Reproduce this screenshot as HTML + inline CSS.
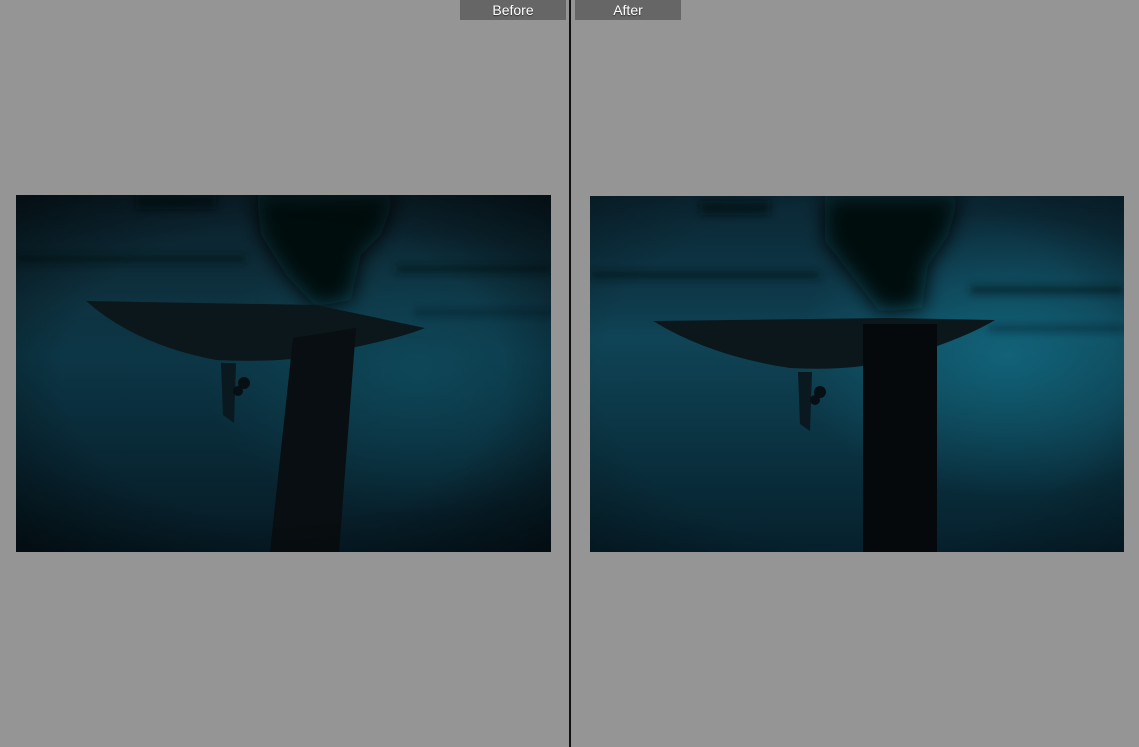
<!DOCTYPE html>
<html><head><style>
html,body{margin:0;padding:0;width:1139px;height:747px;overflow:hidden;background:#959595;font-family:"Liberation Sans",sans-serif;}
.lbl{position:absolute;top:0;height:20px;width:106px;background:#666;color:#fff;font-size:14px;line-height:21px;text-align:center;text-shadow:0 1px 1px #333;}
.div{position:absolute;left:569px;top:0;width:2px;height:747px;background:#111;}
.ph{position:absolute;}
</style></head><body>
<div class="lbl" style="left:460px">Before</div>
<div class="lbl" style="left:575px">After</div>
<div class="div"></div>

<svg class="ph" style="left:16px;top:195px" width="535" height="357" viewBox="0 0 535 357">
<defs>
<linearGradient id="lw" x1="0" y1="0" x2="0" y2="1">
<stop offset="0" stop-color="#0a1e28"/><stop offset="0.3" stop-color="#0e3240"/><stop offset="0.45" stop-color="#0c3646"/><stop offset="1" stop-color="#061a24"/></linearGradient>
<radialGradient id="lg" cx="0.75" cy="0.5" r="0.4"><stop offset="0" stop-color="#0f5366" stop-opacity="0.6"/><stop offset="1" stop-color="#0f5366" stop-opacity="0"/></radialGradient>
<radialGradient id="lv" cx="0.5" cy="0.5" r="0.75"><stop offset="0.55" stop-color="#000" stop-opacity="0"/><stop offset="1" stop-color="#000" stop-opacity="0.6"/></radialGradient>
<filter id="b1" x="-50%" y="-50%" width="200%" height="200%"><feGaussianBlur stdDeviation="10"/></filter>
<filter id="b3" x="-20%" y="-200%" width="140%" height="500%"><feGaussianBlur stdDeviation="4"/></filter>
</defs>
<rect width="535" height="357" fill="url(#lw)"/>
<rect width="535" height="357" fill="url(#lg)"/>
<g filter="url(#b3)" opacity="0.6">
<rect x="0" y="60" width="230" height="8" fill="#061218"/>
<rect x="380" y="70" width="155" height="8" fill="#061218"/>
<rect x="400" y="115" width="135" height="5" fill="#071620"/>
<rect x="120" y="0" width="80" height="14" fill="#05090c"/>
</g>
<path d="M240 0 L380 0 L365 40 L345 60 L335 105 L300 112 L270 80 L245 40 Z" fill="#04090c" filter="url(#b1)"/>
<path d="M70 106 L300 110 L409 133 Q380 145 300 160 Q265 168 200 165 Q120 150 70 106 Z" fill="#0c171c"/>
<path d="M205 168 L220 168 L218 228 L207 220 Z" fill="#0a1820"/>
<circle cx="228" cy="188" r="6" fill="#061014"/><circle cx="222" cy="196" r="5" fill="#061014"/>
<path d="M277 143 L340 133 L323 357 L254 357 Z" fill="#080e11"/>
<rect width="535" height="357" fill="url(#lv)"/>
</svg>

<svg class="ph" style="left:590px;top:196px" width="534" height="356" viewBox="0 0 534 356">
<defs>
<linearGradient id="rw" x1="0" y1="0" x2="0" y2="1">
<stop offset="0" stop-color="#0b2633"/><stop offset="0.3" stop-color="#0e3a4b"/><stop offset="0.4" stop-color="#0f4456"/><stop offset="1" stop-color="#06202c"/></linearGradient>
<radialGradient id="rg" cx="0.78" cy="0.45" r="0.4"><stop offset="0" stop-color="#137088" stop-opacity="0.7"/><stop offset="1" stop-color="#137088" stop-opacity="0"/></radialGradient>
<radialGradient id="rv" cx="0.5" cy="0.5" r="0.8"><stop offset="0.6" stop-color="#000" stop-opacity="0"/><stop offset="1" stop-color="#000" stop-opacity="0.4"/></radialGradient>
<filter id="b2" x="-50%" y="-50%" width="200%" height="200%"><feGaussianBlur stdDeviation="10"/></filter>
<filter id="b4" x="-20%" y="-200%" width="140%" height="500%"><feGaussianBlur stdDeviation="4"/></filter>
</defs>
<rect width="534" height="356" fill="url(#rw)"/>
<rect width="534" height="356" fill="url(#rg)"/>
<g filter="url(#b4)" opacity="0.6">
<rect x="0" y="75" width="230" height="8" fill="#061218"/>
<rect x="380" y="90" width="154" height="8" fill="#061218"/>
<rect x="400" y="130" width="134" height="5" fill="#071620"/>
<rect x="110" y="5" width="70" height="14" fill="#05090c"/>
</g>
<path d="M235 0 L370 0 L358 40 L338 70 L332 112 L290 116 L262 80 L235 45 Z" fill="#04090c" filter="url(#b2)"/>
<path d="M63 125 L300 122 L405 124 Q370 145 300 165 Q260 175 200 172 Q120 160 63 125 Z" fill="#0c171c"/>
<path d="M208 176 L222 176 L220 235 L210 228 Z" fill="#0a1820"/>
<circle cx="230" cy="196" r="6" fill="#061014"/><circle cx="225" cy="204" r="5" fill="#061014"/>
<rect x="273" y="128" width="74" height="228" fill="#05090b"/>
<rect width="534" height="356" fill="url(#rv)"/>
</svg>
</body></html>
